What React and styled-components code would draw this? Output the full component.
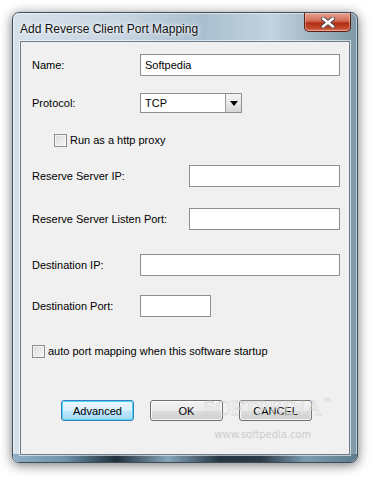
import React from 'react'
import styled, { createGlobalStyle } from 'styled-components'

const Global = createGlobalStyle`
  html, body {
    margin: 0;
    padding: 0;
    background: #ffffff;
  }
  body {
    font-family: "Liberation Sans", Arial, sans-serif;
    font-size: 11px;
    color: #000;
  }
`

function Dialog() {
  return (
    <Window>
      <TitleBar>
        <Title>Add Reverse Client Port Mapping</Title>
        <CloseButton aria-label="close">
          <svg width="14" height="11" viewBox="0 0 14 11">
            <path d="M2 1.5 L12 9.5 M12 1.5 L2 9.5" stroke="#4a4a4a" strokeWidth="4.2" strokeLinecap="round" />
            <path d="M2 1.5 L12 9.5 M12 1.5 L2 9.5" stroke="#ffffff" strokeWidth="2.4" strokeLinecap="round" />
          </svg>
        </CloseButton>
      </TitleBar>
      <Client>
        <Row $top={12} $label={108}>
          <Label>Name:</Label>
          <TextBox defaultValue="Softpedia" $w={200} />
        </Row>
        <Row $top={17} $label={108} $h={20}>
          <Label>Protocol:</Label>
          <Select>
            <SelectValue>TCP</SelectValue>
            <DropButton>
              <svg width="8" height="5" viewBox="0 0 8 5">
                <path d="M0 0 H8 L4 5 Z" fill="#000" />
              </svg>
            </DropButton>
          </Select>
        </Row>
        <CheckRow $top={18} $indent={22}>
          <CheckBox />
          <span>Run as a http proxy</span>
        </CheckRow>
        <Row $top={16} $label={157}>
          <Label>Reserve Server IP:</Label>
          <TextBox $w={151} />
        </Row>
        <Row $top={21} $label={157}>
          <Label>Reserve Server Listen Port:</Label>
          <TextBox $w={151} />
        </Row>
        <Row $top={24} $label={108}>
          <Label>Destination IP:</Label>
          <TextBox $w={200} />
        </Row>
        <Row $top={19} $label={108}>
          <Label>Destination Port:</Label>
          <TextBox $w={71} />
        </Row>
        <CheckRow $top={25} $indent={0}>
          <CheckBox />
          <span>auto port mapping when this software startup</span>
        </CheckRow>
        <ButtonRow>
          <Button $default>Advanced</Button>
          <Button>OK</Button>
          <Button>CANCEL</Button>
        </ButtonRow>
        <Watermark>
          <Brand>SOFTPEDIA<sup>™</sup></Brand>
          <Site>www.softpedia.com</Site>
        </Watermark>
      </Client>
    </Window>
  )
}

export default function App() {
  return (
    <>
      <Global />
      <Page>
        <Dialog />
      </Page>
    </>
  )
}

const Page = styled.div`
  width: 378px;
  height: 483px;
  padding: 12px 0 0 12px;
  box-sizing: border-box;
`

const Window = styled.div`
  width: 346px;
  height: 451px;
  box-sizing: border-box;
  padding: 0 7px 7px 7px;
  border-radius: 7px;
  border: 1px solid #3d4f5c;
  display: flex;
  flex-direction: column;
  background: linear-gradient(90deg, #d5e0ea 0%, #c8d6e2 30%, #a9bfcf 55%, #c3d3df 75%, #7f99a6 100%);
  box-shadow: 0 2px 12px rgba(0,0,0,0.55), inset 0 0 0 1px rgba(255,255,255,0.55);
  position: relative;

  &::after {
    content: "";
    position: absolute;
    left: 0;
    right: 0;
    bottom: 0;
    height: 8px;
    border-radius: 0 0 7px 7px;
    background: linear-gradient(90deg, #8fb0c6 0%, #6f93ab 15%, #1f2f3a 30%, #87a6bb 45%, #253642 60%, #2b3b46 72%, #7d9bb0 85%, #5f7c8c 100%);
    pointer-events: none;
  }
`

const TitleBar = styled.div`
  height: 28px;
  display: flex;
  align-items: flex-start;
  justify-content: space-between;
`

const Title = styled.div`
  font-family: "Liberation Sans", Arial, sans-serif;
  font-size: 12px;
  margin-top: 9px;
  color: #111;
  text-shadow: 0 0 6px rgba(255,255,255,0.95), 0 0 3px rgba(255,255,255,0.9);
`

const CloseButton = styled.div`
  width: 47px;
  height: 19px;
  margin-right: -1px;
  border: 1px solid #5b2016;
  border-top: none;
  border-radius: 0 0 5px 5px;
  box-sizing: border-box;
  display: flex;
  align-items: center;
  justify-content: center;
  background: linear-gradient(180deg, #e8a493 0%, #d26a53 45%, #b12e16 55%, #c24a2e 85%, #d9826a 100%);
  box-shadow: inset 0 0 0 1px rgba(255,210,200,0.45);
`

const Client = styled.div`
  flex: 1;
  position: relative;
  background: #f0f0f0;
  border: 1px solid #6a7c8a;
  box-shadow: 0 0 0 1px rgba(255,255,255,0.6);
  display: flex;
  flex-direction: column;
  padding: 0 12px 0 11px;
  z-index: 1;
`

const Row = styled.div`
  display: grid;
  grid-template-columns: ${p => p.$label}px auto;
  align-items: center;
  height: ${p => p.$h || 22}px;
  margin-top: ${p => p.$top}px;
`

const Label = styled.span`
  white-space: nowrap;
`

const TextBox = styled.input`
  width: ${p => p.$w}px;
  height: 22px;
  box-sizing: border-box;
  border: 1px solid #8e8f8f;
  background: #fff;
  padding: 0 4px;
  font: inherit;
  outline: none;
`

const Select = styled.div`
  width: 102px;
  height: 20px;
  box-sizing: border-box;
  border: 1px solid #8e8f8f;
  background: #fff;
  display: flex;
  align-items: stretch;
`

const SelectValue = styled.span`
  flex: 1;
  display: flex;
  align-items: center;
  padding-left: 4px;
`

const DropButton = styled.span`
  width: 15px;
  border-left: 1px solid #9a9a9a;
  display: flex;
  align-items: center;
  justify-content: center;
  background: linear-gradient(180deg, #f4f4f4 0%, #e8e8e8 50%, #d6d6d6 100%);
`

const CheckRow = styled.label`
  display: flex;
  align-items: center;
  gap: 3px;
  height: 18px;
  margin-top: ${p => p.$top}px;
  padding-left: ${p => p.$indent}px;
`

const CheckBox = styled.span`
  width: 13px;
  height: 13px;
  box-sizing: border-box;
  border: 1px solid #8e8f8f;
  background: linear-gradient(135deg, #d9d9d9 0%, #ececec 60%, #fbfbfb 100%);
  box-shadow: inset 0 0 0 1px #f4f4f4;
`

const ButtonRow = styled.div`
  display: flex;
  gap: 16px;
  margin-top: 40px;
  padding-left: 29px;
`

const Button = styled.button`
  width: 73px;
  height: 21px;
  padding: 0;
  box-sizing: border-box;
  font: inherit;
  font-size: 11px;
  color: #000;
  border-radius: 3px;
  border: 1px solid ${p => (p.$default ? '#3c7fb1' : '#707070')};
  background: ${p =>
    p.$default
      ? 'linear-gradient(180deg, #eaf6fd 0%, #d9f0fc 50%, #bee6fd 51%, #a7d9f5 100%)'
      : 'linear-gradient(180deg, #f2f2f2 0%, #ebebeb 50%, #dddddd 51%, #cfcfcf 100%)'};
  box-shadow: inset 0 0 0 1px ${p => (p.$default ? '#48d6fe' : 'rgba(255,255,255,0.8)')};
`

const Watermark = styled.div`
  position: absolute;
  left: 182px;
  top: 355px;
  display: flex;
  flex-direction: column;
  align-items: center;
  pointer-events: none;
  z-index: 2;
`

const Brand = styled.div`
  font-family: "Liberation Serif", "Times New Roman", serif;
  font-size: 22px;
  line-height: 22px;
  color: rgba(255,255,255,0.45);
  -webkit-text-stroke: 1px rgba(200,200,200,0.5);
  sup {
    font-family: "Liberation Sans", Arial, sans-serif;
    font-size: 7px;
    line-height: 7px;
    -webkit-text-stroke: 0;
    color: #cfcfcf;
    vertical-align: top;
    margin-left: 2px;
  }
`

const Site = styled.div`
  font-family: "DejaVu Sans Condensed", "Liberation Sans Narrow", sans-serif;
  font-size: 11px;
  color: #cdcdcd;
  margin-top: 9px;
  margin-right: 8px;
`
